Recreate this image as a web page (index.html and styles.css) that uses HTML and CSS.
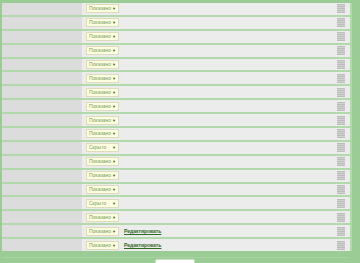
FILE: index.html
```html
<!DOCTYPE html>
<html lang="ru">
<head>
    <meta charset="UTF-8">
    <title>Блоки</title>
    <link rel="stylesheet" href="styles.css">
</head>
<body>
    <div class="panel">
        <div class="list">
            <div class="row"><div class="name"></div><div class="main"><span class="select">Показано<i>▼</i></span></div><div class="grip"><span class="handle"></span></div></div>
            <div class="row"><div class="name"></div><div class="main"><span class="select">Показано<i>▼</i></span></div><div class="grip"><span class="handle"></span></div></div>
            <div class="row"><div class="name"></div><div class="main"><span class="select">Показано<i>▼</i></span></div><div class="grip"><span class="handle"></span></div></div>
            <div class="row"><div class="name"></div><div class="main"><span class="select">Показано<i>▼</i></span></div><div class="grip"><span class="handle"></span></div></div>
            <div class="row"><div class="name"></div><div class="main"><span class="select">Показано<i>▼</i></span></div><div class="grip"><span class="handle"></span></div></div>
            <div class="row"><div class="name"></div><div class="main"><span class="select">Показано<i>▼</i></span></div><div class="grip"><span class="handle"></span></div></div>
            <div class="row"><div class="name"></div><div class="main"><span class="select">Показано<i>▼</i></span></div><div class="grip"><span class="handle"></span></div></div>
            <div class="row"><div class="name"></div><div class="main"><span class="select">Показано<i>▼</i></span></div><div class="grip"><span class="handle"></span></div></div>
            <div class="row"><div class="name"></div><div class="main"><span class="select">Показано<i>▼</i></span></div><div class="grip"><span class="handle"></span></div></div>
            <div class="row"><div class="name"></div><div class="main"><span class="select">Показано<i>▼</i></span></div><div class="grip"><span class="handle"></span></div></div>
            <div class="row"><div class="name"></div><div class="main"><span class="select">Скрыто<i>▼</i></span></div><div class="grip"><span class="handle"></span></div></div>
            <div class="row"><div class="name"></div><div class="main"><span class="select">Показано<i>▼</i></span></div><div class="grip"><span class="handle"></span></div></div>
            <div class="row"><div class="name"></div><div class="main"><span class="select">Показано<i>▼</i></span></div><div class="grip"><span class="handle"></span></div></div>
            <div class="row"><div class="name"></div><div class="main"><span class="select">Показано<i>▼</i></span></div><div class="grip"><span class="handle"></span></div></div>
            <div class="row"><div class="name"></div><div class="main"><span class="select">Скрыто<i>▼</i></span></div><div class="grip"><span class="handle"></span></div></div>
            <div class="row"><div class="name"></div><div class="main"><span class="select">Показано<i>▼</i></span></div><div class="grip"><span class="handle"></span></div></div>
            <div class="row"><div class="name"></div><div class="main"><span class="select">Показано<i>▼</i></span><a class="edit" href="#">Редактировать</a></div><div class="grip"><span class="handle"></span></div></div>
            <div class="row"><div class="name"></div><div class="main"><span class="select">Показано<i>▼</i></span><a class="edit" href="#">Редактировать</a></div><div class="grip"><span class="handle"></span></div></div>
        </div>
        <div class="footer">
            <button class="save"></button>
        </div>
    </div>
</body>
</html>
```

FILE: styles.css
```css
body {
    margin: 0;
    background-color: #9ccc96;
    font-family: "Liberation Sans", Arial, sans-serif;
}

.panel {
    width: 356px;
    padding: 3px 0 0 2px;
    box-sizing: border-box;
}

.list {
    width: 348px;
    display: flex;
    flex-direction: column;
    gap: 2px;
    background-color: #b2d9ac;
    padding-right: 2px;
    box-sizing: content-box;
}

.row {
    display: flex;
    height: 11.9px;
    background-color: #ececec;
}

.name {
    width: 80px;
    background-color: #dcdcdc;
}

.main {
    flex: 1;
    display: flex;
    align-items: center;
    padding-left: 4px;
}

.select {
    display: inline-flex;
    align-items: center;
    justify-content: space-between;
    width: 27px;
    height: 7px;
    padding: 0 2px;
    background-color: #fdfde2;
    border: 1px solid #dcdcb8;
    color: #7aa05a;
    font-size: 5px;
    line-height: 7px;
}

.select i {
    font-style: normal;
    font-size: 4px;
    color: #2d6a1e;
}

.edit {
    margin-left: 5px;
    font-size: 5px;
    font-weight: bold;
    color: #2f6a22;
    text-decoration: underline;
}

.grip {
    width: 13px;
    display: flex;
    align-items: center;
}

.handle {
    display: block;
    width: 8px;
    height: 9px;
    background: repeating-linear-gradient(#bcbcbc 0, #bcbcbc 1px, #d2d2d2 1px, #d2d2d2 2px);
}

.footer {
    width: 346px;
    height: 8px;
    margin-top: 6px;
    border-top: 1px solid #a8d3a2;
    display: flex;
    justify-content: center;
}

.save {
    width: 40px;
    height: 10px;
    margin-top: 1px;
    background-color: #ffffff;
    border: 1px solid #cfe3cb;
    border-radius: 2px;
}
```
